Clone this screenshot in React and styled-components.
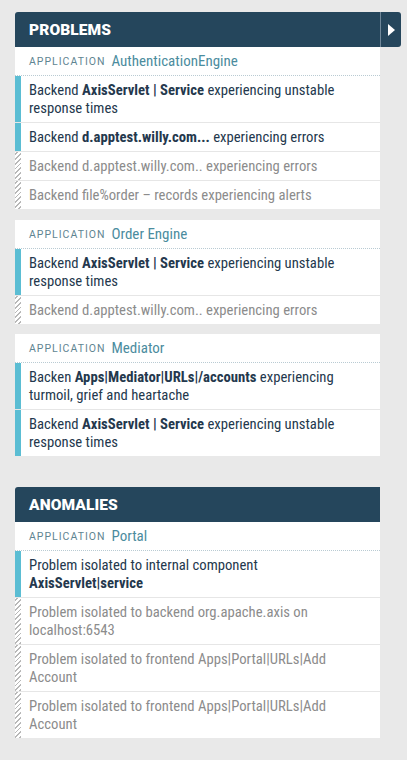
import React from "react";
import styled, { createGlobalStyle } from "styled-components";

const Global = createGlobalStyle`
  html, body { margin: 0; padding: 0; background: #e9e9e9; }
  body {
    padding: 12px 0 0 15px;
    font-family: "Roboto Condensed", "Liberation Sans Narrow", "DejaVu Sans Condensed", Roboto, sans-serif;
    -webkit-font-smoothing: antialiased;
  }
`;

const Section = styled.section`
  width: 386px;
  margin-bottom: ${(p) => p.$gap || 0}px;
`;

const Header = styled.div`
  display: flex;
  height: 35px;
`;

const Title = styled.h2`
  width: 365px;
  box-sizing: border-box;
  margin: 0;
  padding: 1px 14px 0;
  display: flex;
  align-items: center;
  background: #25465c;
  color: #fff;
  font-family: Roboto, sans-serif;
  font-weight: 900;
  font-size: 15.5px;
  letter-spacing: 0.1px;
  border-radius: 3px 0 0 0;
`;

const Toggle = styled.button`
  width: 21px;
  border: 0;
  border-left: 1px solid #6f8799;
  padding: 0;
  margin: 0;
  background: #25465c;
  border-radius: 0 3px 3px 0;
  display: flex;
  align-items: center;
  justify-content: center;
  cursor: pointer;
`;

const Group = styled.div`
  width: 365px;
  background: #fff;
  margin-bottom: ${(p) => p.$gap}px;
  &:last-child { margin-bottom: 0; }
`;

const AppRow = styled.div`
  height: 28px;
  display: flex;
  align-items: center;
  padding-left: 14px;
  border-bottom: 1px dotted #b9cbd3;
`;

const AppLabel = styled.span`
  font-size: 10.5px;
  letter-spacing: 1px;
  color: #5f8592;
  margin-right: 6px;
  font-family: Roboto, sans-serif;
`;

const AppName = styled.span`
  font-size: 15px;
  color: #4b8c9e;
`;

const Item = styled.div`
  position: relative;
  padding: 5px 14px 5px 14px;
  font-size: 14.7px;
  line-height: 18px;
  color: ${(p) => (p.$muted ? "#8c8c8c" : "#24384d")};
  border-bottom: 1px solid #e6e6e6;
  &:last-child { border-bottom: 0; }
  &::before {
    content: "";
    position: absolute;
    left: 0;
    top: 0;
    bottom: 0;
    width: 6px;
    background: ${(p) =>
      p.$muted
        ? "repeating-linear-gradient(135deg, #fff 0 1.2px, #b8b8b8 1.2px 2.4px, #fff 2.4px 3.4px)"
        : "#5bbdd3"};
  }
  b { font-weight: 700; }
`;

const Play = () => (
  <svg width="7" height="12" viewBox="0 0 7 12">
    <path d="M0 0 L7 6 L0 12 Z" fill="#fff" />
  </svg>
);

const problems = [
  {
    app: "AuthenticationEngine",
    gap: 11,
    items: [
      { m: false, t: <>Backend <b>AxisServlet | Service</b> experiencing unstable response times</> },
      { m: false, t: <>Backend <b>d.apptest.willy.com...</b> experiencing errors</> },
      { m: true, t: <>Backend d.apptest.willy.com.. experiencing errors</> },
      { m: true, t: <>Backend file%order – records experiencing alerts</> },
    ],
  },
  {
    app: "Order Engine",
    gap: 10,
    items: [
      { m: false, t: <>Backend <b>AxisServlet | Service</b> experiencing unstable response times</> },
      { m: true, t: <>Backend d.apptest.willy.com.. experiencing errors</> },
    ],
  },
  {
    app: "Mediator",
    gap: 0,
    items: [
      { m: false, t: <>Backen <b>Apps|Mediator|URLs|/accounts</b> experiencing turmoil, grief and heartache</> },
      { m: false, t: <>Backend <b>AxisServlet | Service</b> experiencing unstable response times</> },
    ],
  },
];

const anomalies = [
  {
    app: "Portal",
    gap: 0,
    items: [
      { m: false, t: <>Problem isolated to internal component <b>AxisServlet|service</b></> },
      { m: true, t: <>Problem isolated to backend org.apache.axis on localhost:6543</> },
      { m: true, t: <>Problem isolated to frontend Apps|Portal|URLs|Add Account</> },
      { m: true, t: <>Problem isolated to frontend Apps|Portal|URLs|Add Account</> },
    ],
  },
];

const Groups = ({ data }) =>
  data.map((g, i) => (
    <Group key={i} $gap={g.gap}>
      <AppRow>
        <AppLabel>APPLICATION</AppLabel>
        <AppName>{g.app}</AppName>
      </AppRow>
      {g.items.map((it, j) => (
        <Item key={j} $muted={it.m}>{it.t}</Item>
      ))}
    </Group>
  ));

export default function App() {
  return (
    <>
      <Global />
      <Section $gap={31}>
        <Header>
          <Title>PROBLEMS</Title>
          <Toggle aria-label="expand"><Play /></Toggle>
        </Header>
        <Groups data={problems} />
      </Section>
      <Section>
        <Header>
          <Title>ANOMALIES</Title>
        </Header>
        <Groups data={anomalies} />
      </Section>
    </>
  );
}
